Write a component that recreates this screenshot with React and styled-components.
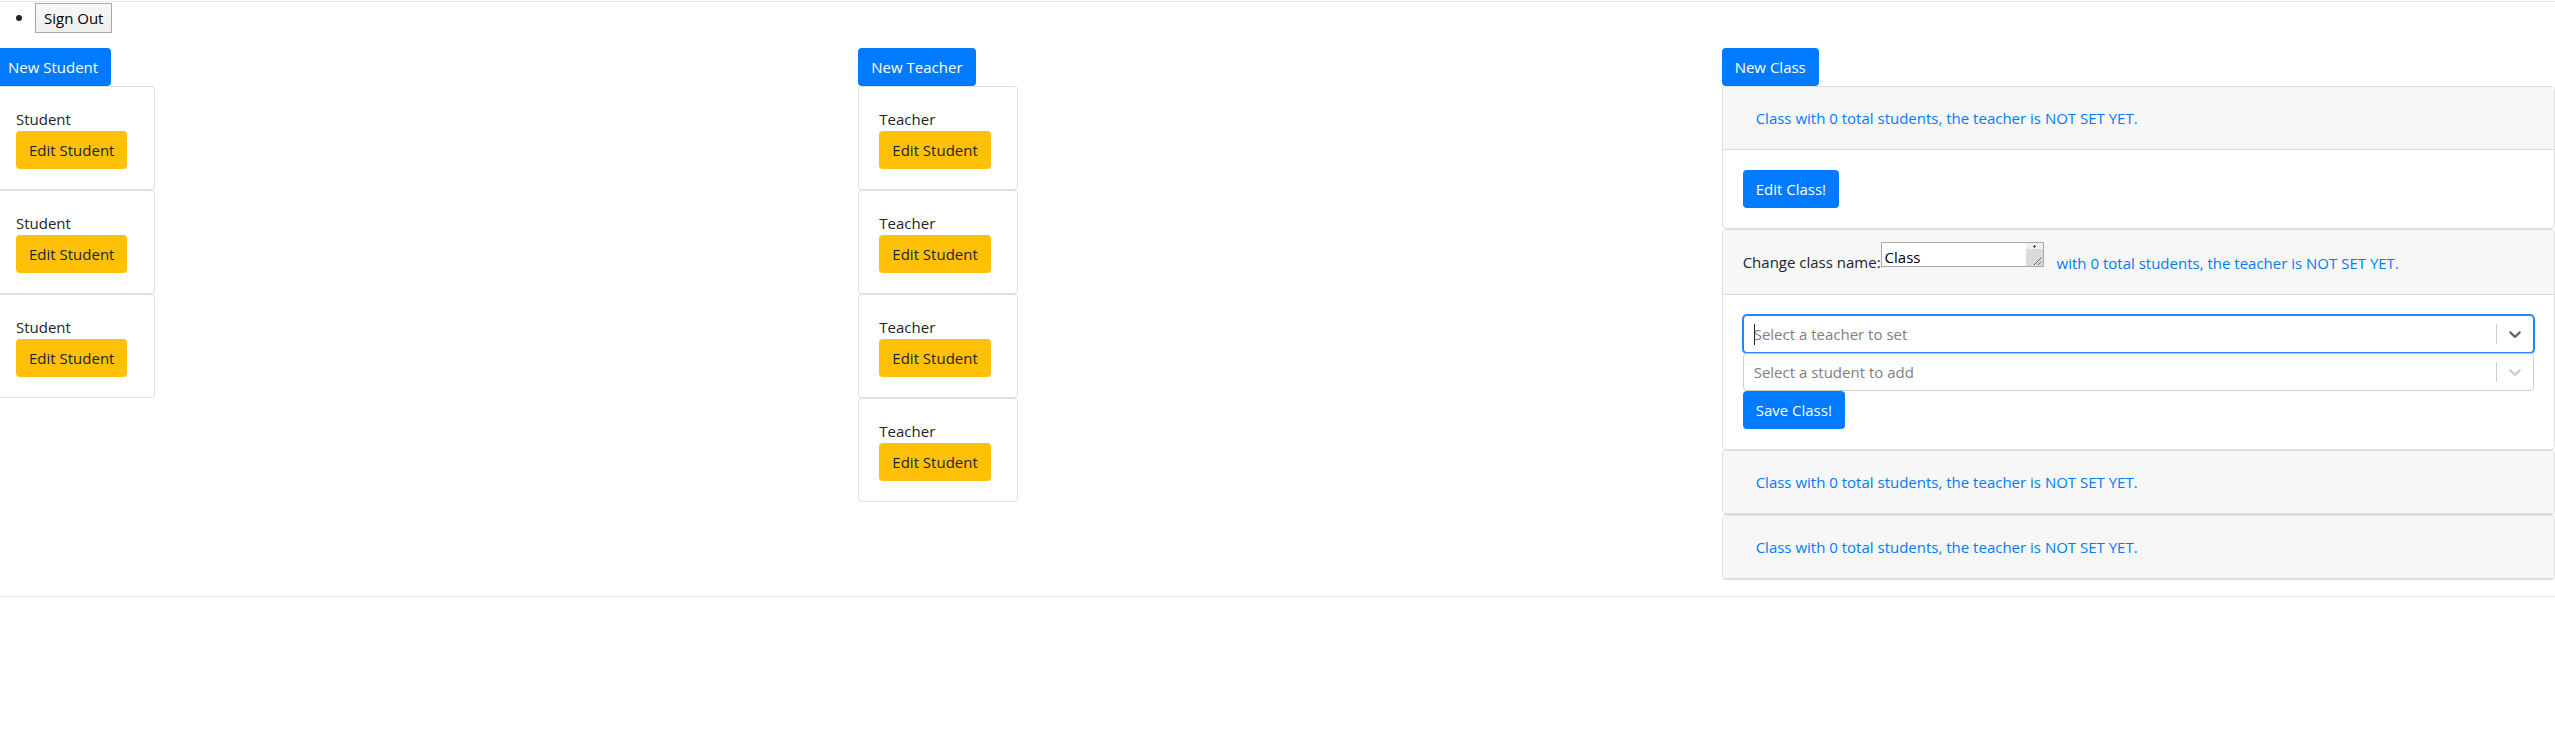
import React from "react";
import styled, { createGlobalStyle, css } from "styled-components";

const GlobalStyle = createGlobalStyle`
  *, *::before, *::after { box-sizing: border-box; }
  body {
    margin: 0;
    background: #fff;
    color: #212529;
    font-family: "Open Sans", "Noto Sans", sans-serif;
    font-size: 15px;
    line-height: 24px;
    overflow-x: hidden;
  }
  button, select, textarea { font: inherit; }
`;

const Page = styled.div`
  padding-top: 1px;
`;

const Divider = styled.hr`
  margin: 0;
  border: 0;
  border-top: 1px solid rgba(0, 0, 0, 0.1);
`;

const Nav = styled.ul`
  margin: 0 0 16px -5px;
  padding-left: 40px;
`;

const NavItem = styled.li`
  height: 30px;
  line-height: 30px;

  &::marker {
    font-size: 18px;
  }
`;

const SignOut = styled.button`
  display: block;
  height: 30px;
  padding: 0 8px;
  border: 1px solid #a6a6a6;
  background: linear-gradient(#f8f8f8, #eee);
  color: #000;
  line-height: 24px;
`;

const Columns = styled.main`
  display: grid;
  grid-template-columns: repeat(3, minmax(0, 1fr));
  gap: 30px;
  margin: 0 0 16px -5px;
`;

const Column = styled.section`
  display: flex;
  flex-direction: column;
  align-items: flex-start;
`;

const variants = {
  primary: css`
    background: #007bff;
    color: #fff;
  `,
  warning: css`
    background: #ffc107;
    color: #212529;
  `,
  link: css`
    background: transparent;
    color: #007bff;
  `,
};

const Button = styled.button`
  height: 38px;
  padding: 6px 12px;
  border: 1px solid transparent;
  border-radius: 4px;
  line-height: 24px;
  white-space: nowrap;
  cursor: pointer;
  ${(p) => variants[p.$variant || "primary"]}
`;

const Card = styled.article`
  display: flex;
  flex-direction: column;
  width: ${(p) => (p.$wide ? "100%" : "160px")};
  border: 1px solid #dfdfdf;
  border-radius: 4px;
  background: #fff;
  overflow: hidden;
`;

const CardBody = styled.div`
  display: flex;
  flex-direction: column;
  align-items: flex-start;
  padding: 20px;
`;

const CardHeader = styled.header`
  display: flex;
  align-items: flex-end;
  min-height: ${(p) => (p.$editing ? "65px" : "63px")};
  padding: 12px 20px;
  border-bottom: 1px solid #d8d8d8;
  background: #f7f7f7;
`;

const NameLabel = styled.label`
  align-self: center;
  white-space: nowrap;
`;

const NameField = styled.div`
  display: flex;
  align-self: flex-start;
  width: 163px;
  height: 25px;
  border: 1px solid #a9a9a9;
  background: #fff;
`;

const NameInput = styled.textarea`
  flex: 1;
  min-width: 0;
  height: 23px;
  padding: 2px 3px 0;
  border: 0;
  outline: 0;
  background: transparent;
  color: #000;
  resize: none;
  overflow: hidden;
`;

const Control = styled.div`
  display: flex;
  align-items: center;
  width: 100%;
  height: 38px;
  padding-left: 10px;
  border: 1px solid ${(p) => (p.$focused ? "#2684ff" : "#ccc")};
  border-radius: 4px;
  box-shadow: ${(p) => (p.$focused ? "0 0 0 1px #2684ff" : "none")};
  background: #fff;
  color: ${(p) => (p.$focused ? "#666" : "#ccc")};
`;

const Caret = styled.span`
  width: 1px;
  height: 21px;
  margin-right: -1px;
  background: #222;
`;

const Picker = styled.select`
  flex: 1;
  min-width: 0;
  height: 24px;
  padding: 0;
  border: 0;
  outline: 0;
  appearance: none;
  background: transparent;
  color: #808080;
`;

const Indicator = styled.span`
  display: flex;
  align-items: center;
  justify-content: center;
  width: 37px;
  height: 20px;
  border-left: 1px solid #ccc;
`;

function Chevron() {
  return (
    <svg width="20" height="20" viewBox="0 0 20 20" fill="currentColor" aria-hidden="true">
      <path d="M4.516 7.548c0.436-0.446 1.043-0.481 1.576 0l3.908 3.747 3.908-3.747c0.533-0.481 1.141-0.446 1.574 0 0.436 0.445 0.408 1.197 0 1.615-0.406 0.418-4.695 4.502-4.695 4.502-0.217 0.223-0.502 0.335-0.787 0.335s-0.57-0.112-0.789-0.335c0 0-4.287-4.084-4.695-4.502s-0.436-1.17 0-1.615z" />
    </svg>
  );
}

function ScrollGutter() {
  return (
    <svg width="17" height="23" viewBox="0 0 17 23" aria-hidden="true">
      <rect width="17" height="23" fill="#dadada" />
      <rect width="17" height="6" fill="#f1f1f1" />
      <path d="M8 2h1v1h1v1h-1v1h-1v-1h-1v-1h1z" fill="#505050" />
      <path d="M8 22l7.500-7.500M12 22l3.500-3.500" stroke="#666" fill="none" />
    </svg>
  );
}

function Select({ label, focused }) {
  return (
    <Control $focused={focused}>
      {focused && <Caret />}
      <Picker aria-label={label} defaultValue="">
        <option value="">{label}</option>
      </Picker>
      <Indicator>
        <Chevron />
      </Indicator>
    </Control>
  );
}

function PersonCard({ role }) {
  return (
    <Card>
      <CardBody>
        <span>{role}</span>
        <Button $variant="warning">Edit Student</Button>
      </CardBody>
    </Card>
  );
}

function PersonColumn({ role, count }) {
  return (
    <Column>
      <Button>New {role}</Button>
      {Array.from({ length: count }, (_, i) => (
        <PersonCard key={i} role={role} />
      ))}
    </Column>
  );
}

const summary = "with 0 total students, the teacher is NOT SET YET.";

function ClassCard({ children }) {
  return (
    <Card $wide>
      <CardHeader>
        <Button $variant="link">Class {summary}</Button>
      </CardHeader>
      {children}
    </Card>
  );
}

function ClassEditor() {
  return (
    <Card $wide>
      <CardHeader $editing>
        <NameLabel htmlFor="class-name">Change class name:</NameLabel>
        <NameField>
          <NameInput id="class-name" rows={1} defaultValue="Class" />
          <ScrollGutter />
        </NameField>
        <Button $variant="link">{summary}</Button>
      </CardHeader>
      <CardBody>
        <Select label="Select a teacher to set" focused />
        <Select label="Select a student to add" />
        <Button>Save Class!</Button>
      </CardBody>
    </Card>
  );
}

export default function App() {
  return (
    <Page>
      <GlobalStyle />
      <Divider />
      <Nav>
        <NavItem>
          <SignOut>Sign Out</SignOut>
        </NavItem>
      </Nav>
      <Columns>
        <PersonColumn role="Student" count={3} />
        <PersonColumn role="Teacher" count={4} />
        <Column>
          <Button>New Class</Button>
          <ClassCard>
            <CardBody>
              <Button>Edit Class!</Button>
            </CardBody>
          </ClassCard>
          <ClassEditor />
          <ClassCard />
          <ClassCard />
        </Column>
      </Columns>
      <Divider />
    </Page>
  );
}
